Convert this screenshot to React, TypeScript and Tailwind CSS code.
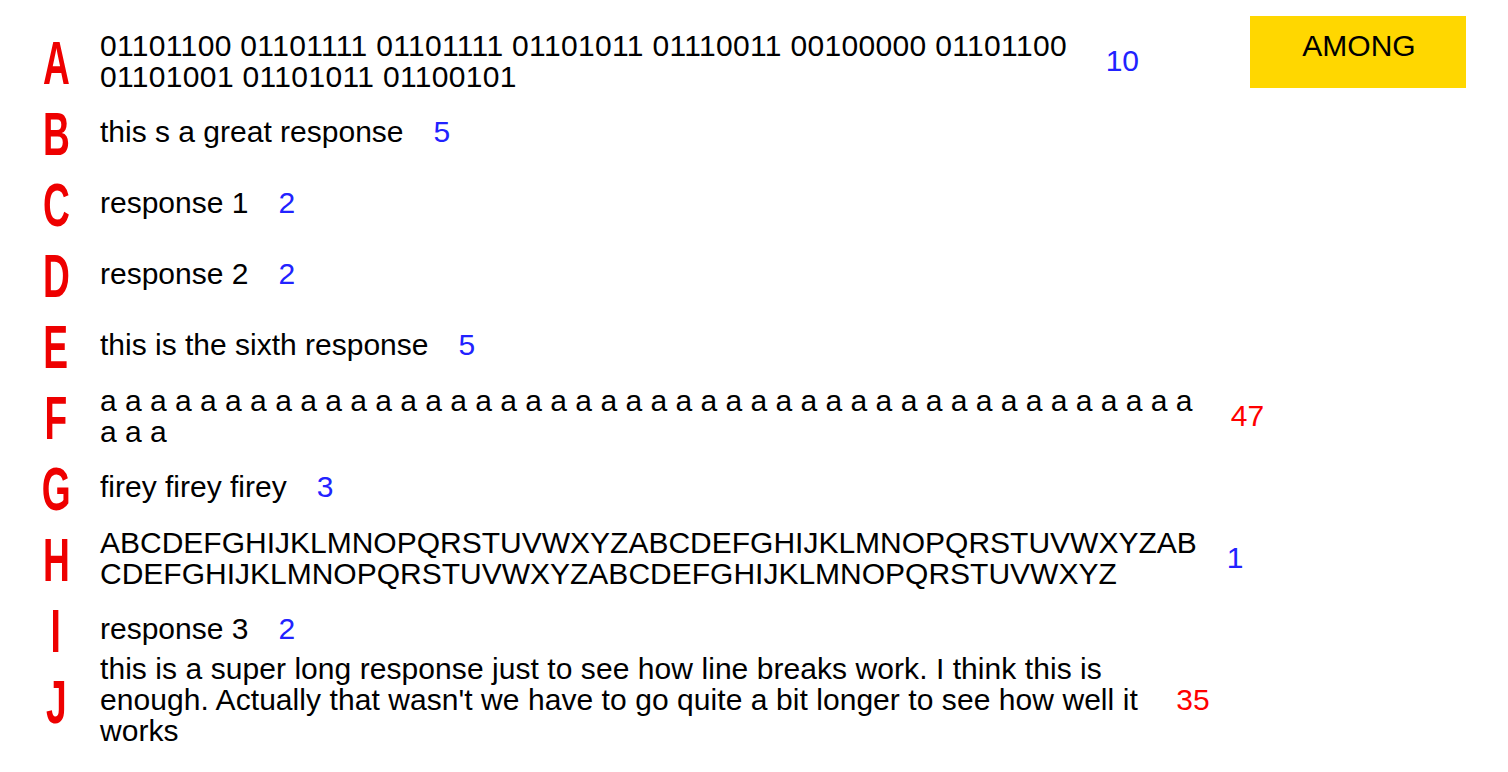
import React from "react";

type Row = {
  letter: string;
  lines: string[];
  count: number;
  hot?: boolean;
  track?: string;
};

const aLine1 = Array.from({ length: 44 }, () => "a").join(" ") + " ";

const rows: Row[] = [
  {
    letter: "A",
    lines: [
      "01101100 01101111 01101111 01101011 01110011 00100000 01101100 ",
      "01101001 01101011 01100101",
    ],
    count: 10,
    track: "tracking-[0.33px]",
  },
  { letter: "B", lines: ["this s a great response"], count: 5 },
  { letter: "C", lines: ["response 1"], count: 2 },
  { letter: "D", lines: ["response 2"], count: 2 },
  { letter: "E", lines: ["this is the sixth response"], count: 5 },
  { letter: "F", lines: [aLine1, "a a a"], count: 47, hot: true },
  { letter: "G", lines: ["firey firey firey"], count: 3 },
  {
    letter: "H",
    lines: [
      "ABCDEFGHIJKLMNOPQRSTUVWXYZABCDEFGHIJKLMNOPQRSTUVWXYZAB",
      "CDEFGHIJKLMNOPQRSTUVWXYZABCDEFGHIJKLMNOPQRSTUVWXYZ",
    ],
    count: 1,
  },
  { letter: "I", lines: ["response 3"], count: 2 },
  {
    letter: "J",
    lines: [
      "this is a super long response just to see how line breaks work. I think this is ",
      "enough. Actually that wasn't we have to go quite a bit longer to see how well it ",
      "works",
    ],
    count: 35,
    hot: true,
    track: "tracking-[0.06px]",
  },
];

export default function App() {
  return (
    <div
      className="flex w-[1508px] h-[772px] bg-white overflow-hidden text-black"
      style={{ fontFamily: '"Liberation Sans", Arial, sans-serif' }}
    >
      <div className="flex-1 min-w-0 flex flex-col pt-[25px]">
        {rows.map((r) => (
          <div key={r.letter} className="flex items-center h-[71px] shrink-0">
            <div className="w-[100px] pl-[12px] flex justify-center shrink-0">
              <span className="inline-block text-[62px] leading-[71px] font-bold text-[#ee0000] scale-x-[0.6] translate-y-[2px]">
                {r.letter}
              </span>
            </div>
            <div
              className={`flex flex-col shrink-0 text-[30px] leading-[31px] ${
                r.track ?? ""
              }`}
            >
              {r.lines.map((l, i) => (
                <div key={i} className="whitespace-pre">
                  {l}
                </div>
              ))}
            </div>
            <div
              className={`ml-[30px] shrink-0 text-[30px] leading-[31px] ${
                r.hot ? "text-[#ff0000]" : "text-[#2222ff]"
              }`}
            >
              {r.count}
            </div>
          </div>
        ))}
      </div>
      <div className="w-[216px] h-[72px] mt-[16px] mr-[42px] shrink-0 bg-[#ffd700] flex justify-center pt-[14px]">
        <span className="text-[30px] leading-[31px] pl-[2px]">AMONG</span>
      </div>
    </div>
  );
}
